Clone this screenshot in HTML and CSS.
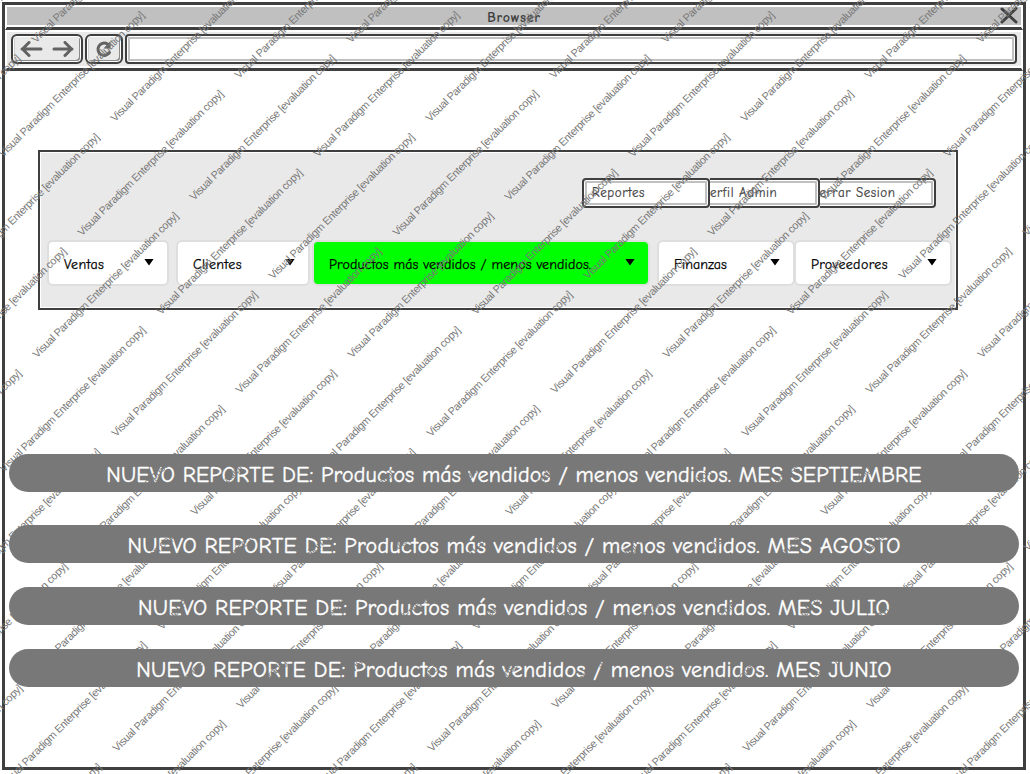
FILE: index.html
```
<!DOCTYPE html>
<html lang="es">
<head>
<meta charset="utf-8">
<title>Browser</title>
<link rel="stylesheet" href="styles.css">
</head>
<body>
<main class="window">
  <header class="titlebar">
    <span class="title">Browser</span>
    <svg class="close" viewBox="0 0 18 17"><path d="M2 2L16 15M16 1.500L2 15"/></svg>
  </header>
  <div class="toolbar">
    <div class="tool nav">
      <svg width="54" height="16" viewBox="0 0 54 16"><path d="M21 8H2M9 1.500L2.500 8L9 14.500M34 8H52M45 1.500L51.500 8L45 14.500"/></svg>
    </div>
    <div class="tool reload">
      <svg width="18" height="18" viewBox="0 0 18 18"><path d="M14.500 12.500A6.200 6.200 0 1 1 12.500 4"/><path class="solid" d="M15.500 1V8.500H8.500Z"/></svg>
    </div>
    <div class="address"></div>
  </div>
  <section class="content">
    <div class="panel">
      <div class="account">
        <div class="field first"><span>Reportes</span></div>
        <div class="field second"><span>erfil Admin</span></div>
        <div class="field third"><span>errar Sesion</span></div>
      </div>
      <nav class="menus">
        <div class="menu ventas"><span>Ventas</span><i class="arrow"></i></div>
        <div class="menu clientes"><span>Clientes</span><i class="arrow"></i></div>
        <div class="menu productos"><span>Productos más vendidos / menos vendidos.</span><i class="arrow"></i></div>
        <div class="menu finanzas"><span>Finanzas</span><i class="arrow"></i></div>
        <div class="menu proveedores"><span>Proveedores</span><i class="arrow"></i></div>
      </nav>
    </div>
    <div class="reports">
      <div class="report newest"><span>NUEVO REPORTE DE: Productos más vendidos / menos vendidos. MES SEPTIEMBRE</span></div>
      <div class="report"><span>NUEVO REPORTE DE: Productos más vendidos / menos vendidos. MES AGOSTO</span></div>
      <div class="report"><span>NUEVO REPORTE DE: Productos más vendidos / menos vendidos. MES JULIO</span></div>
      <div class="report"><span>NUEVO REPORTE DE: Productos más vendidos / menos vendidos. MES JUNIO</span></div>
    </div>
  </section>
</main>
<svg class="watermark" width="1030" height="774"></svg>
<script src="watermark.js"></script>
</body>
</html>
```
FILE: styles.css
```
* { box-sizing: border-box; }

body {
  margin: 0;
  width: 1030px;
  height: 774px;
  padding: 2px;
  overflow: hidden;
  background: #fff;
  color: #3f3f3f;
  font-family: "Comic Sans MS", "Comic Neue", "Noto Sans", sans-serif;
}

.window {
  display: flex;
  flex-direction: column;
  width: 1024px;
  height: 768px;
  border: 3px solid #3f3f3f;
  background: #fff;
}

.titlebar {
  position: relative;
  height: 25px;
  border: 2px solid #fff;
  border-bottom: 3px solid #3f3f3f;
  box-shadow: inset 0 -2px #fff;
  background: #c0c0c0;
  text-align: center;
}

.title {
  display: block;
  font-size: 14px;
  font-weight: 700;
  letter-spacing: 0.7px;
  line-height: 21px;
}

.close {
  position: absolute;
  right: 3px;
  top: 0;
  width: 18px;
  height: 17px;
}

.close path { stroke: #3f3f3f; stroke-width: 3; stroke-linecap: round; }

.toolbar {
  display: flex;
  gap: 2px;
  height: 41px;
  padding: 2px 4px;
  border: 2px solid #fff;
  border-bottom: 3px solid #3f3f3f;
  box-shadow: inset 0 -2px #fff;
  background: #e9e9e9;
}

.tool {
  display: flex;
  align-items: center;
  justify-content: center;
  height: 30px;
  border: 2px solid #3f3f3f;
  border-radius: 6px;
  box-shadow: inset 0 0 0 1px #fff, inset -2px -2px #8a8a8a, inset 2px 0 #cfcfcf;
}

.nav { width: 72px; }
.reload { width: 38px; }

.tool path {
  fill: none;
  stroke: #626262;
  stroke-width: 3;
  stroke-linecap: round;
  stroke-linejoin: round;
}

.tool .solid { fill: #626262; stroke: none; }

.address {
  width: 892px;
  height: 30px;
  border: 2px solid #3f3f3f;
  border-radius: 4px;
  background: #fff;
  box-shadow: inset 0 0 0 1px #fff, inset 0 0 0 3px #c0c0c0;
}

.content { display: flex; flex-direction: column; padding: 79px 4px 0; }

.panel {
  width: 920px;
  height: 160px;
  margin-left: 29px;
  border: 2px solid #3f3f3f;
  background: #e9e9e9;
  box-shadow: inset 1px 1px #fff, inset -1px -1px #fff;
}

.account { display: flex; padding: 26px 0 0 542px; }

.field {
  height: 30px;
  border: 2px solid #3f3f3f;
  border-radius: 4px;
  background: #fff;
  box-shadow: inset 0 0 0 1px #fff, inset 0 0 0 3px #c0c0c0;
  font-size: 13px;
  letter-spacing: 0.6px;
  line-height: 26px;
  white-space: nowrap;
  -webkit-text-stroke: 0.2px #3f3f3f;
}

.first { width: 128px; padding-left: 8px; }
.second { width: 109.500px; }
.third { width: 116.500px; }
.second, .third {
  border-left: 0;
  border-radius: 0 4px 4px 0;
  box-shadow: inset -1px 0 #fff, inset 0 1px #fff, inset 0 -1px #fff, inset -3px 0 #c0c0c0, inset 0 3px #c0c0c0, inset 0 -3px #c0c0c0;
}

.menus { display: flex; padding: 32px 0 0 7px; }

.menu {
  display: flex;
  align-items: center;
  justify-content: space-between;
  height: 46px;
  padding: 0 13px 0 15px;
  border: 2px solid #dedede;
  border-radius: 6px;
  background: #fff;
  color: #000;
  font-size: 14px;
  letter-spacing: 0.35px;
  line-height: 20px;
  white-space: nowrap;
  -webkit-text-stroke: 0.25px #000;
}

.menu span { padding-top: 3px; }

.arrow {
  width: 10px;
  height: 7px;
  margin-bottom: 2px;
  background: #000;
  clip-path: polygon(0 0, 100% 0, 50% 100%);
}

.ventas { width: 122px; }
.clientes { width: 134px; margin-left: 7px; }
.productos { width: 338px; margin-left: 2px; background: #0f0; letter-spacing: 0.12px; }
.finanzas { width: 138px; margin-left: 7px; letter-spacing: 0; }
.proveedores { width: 158px; margin-left: -1px; }

.reports { display: flex; flex-direction: column; gap: 24px; padding-top: 144px; }

.report {
  width: 1010px;
  height: 38px;
  border-radius: 19px;
  background: #787878;
  color: #fff;
  font-size: 22px;
  letter-spacing: 0.28px;
  line-height: 43px;
  text-align: center;
  white-space: nowrap;
  -webkit-text-stroke: 0.4px #fff;
}

.newest { margin-bottom: 9px; letter-spacing: 0.15px; }

.watermark {
  position: absolute;
  left: 0;
  top: 0;
  pointer-events: none;
}

.watermark text {
  fill: #787878;
  font-family: "Liberation Sans", Arial, sans-serif;
  font-size: 10.8px;
}
```
FILE: watermark.js
```
// Two interleaved series of diagonal stamps, each repeating on both diagonals.
const layer = document.querySelector('.watermark');
for (const [x0, y0] of [[36, 43.5], [239, 79]]) {
  for (let down = -14; down < 18; down++) {
    for (let along = -8; along < 9; along++) {
      const x = x0 + down * 79 + along * 157;
      const y = y0 + down * 78.75 - along * 157.5;
      if (x < -150 || x > 1030 || y < -5 || y > 920) continue;
      const text = document.createElementNS('http://www.w3.org/2000/svg', 'text');
      text.setAttribute('transform', `translate(${x} ${y}) rotate(-45)`);
      text.setAttribute('textLength', '201');
      text.textContent = 'Visual Paradigm Enterprise [evaluation copy]';
      layer.append(text);
    }
  }
}
```
